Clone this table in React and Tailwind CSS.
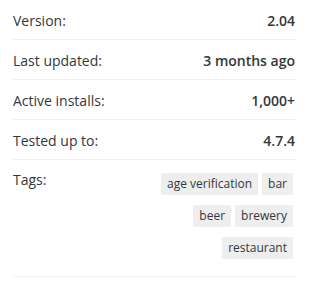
import React from "react";

const rows = [
  ["Version:", "2.04"],
  ["Last updated:", "3 months ago"],
  ["Active installs:", "1,000+"],
  ["Tested up to:", "4.7.4"],
];

const tags = [["age verification", "bar"], ["beer", "brewery"], ["restaurant"]];

export default function App() {
  return (
    <div
      className="w-[315px] h-[292px] overflow-hidden bg-white text-[#32373c]"
      style={{ fontFamily: '"Open Sans", sans-serif' }}
    >
      <div className="mx-[13px] w-[282px]">
        <ul>
          {rows.map(([k, v]) => (
            <li
              key={k}
              className="h-[40px] border-b border-[#eeeeee] flex items-center justify-between text-[14px] pt-[2px]"
            >
              <span>{k}</span>
              <span className="font-semibold">{v}</span>
            </li>
          ))}
          <li className="border-b border-[#eeeeee] flex justify-between items-start text-[14px] pt-[13px] pb-[7px]">
            <span className="-mt-[4px]">Tags:</span>
            <div className="flex flex-col items-end">
              {tags.map((row, i) => (
                <div key={i} className="flex gap-[4px] mr-[2px] mb-[10px]">
                  {row.map((t) => (
                    <span
                      key={t}
                      className="h-[22px] flex items-center px-[6px] bg-[#eeeeee] rounded-[2px] text-[12px] leading-none"
                    >
                      {t}
                    </span>
                  ))}
                </div>
              ))}
            </div>
          </li>
        </ul>
        <div className="text-right pr-[12px] pt-[10px] text-[14px] text-[#0073aa]">
          Advanced View
        </div>
      </div>
    </div>
  );
}
